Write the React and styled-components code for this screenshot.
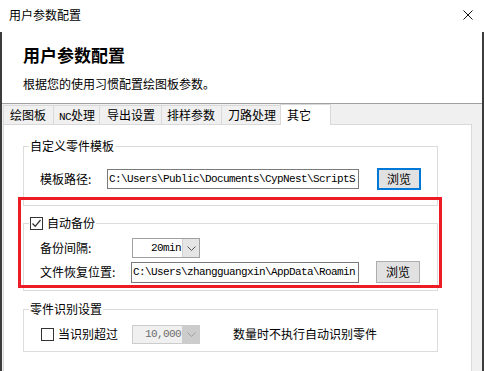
import React from 'react';
import styled, { createGlobalStyle } from 'styled-components';

const CJK = `"Noto Sans CJK SC", "Noto Sans", sans-serif`;
const MONO = `"Liberation Mono", "Noto Sans CJK SC", monospace`;

const GlobalStyle = createGlobalStyle`
  html, body { margin: 0; padding: 0; background: #fff; }
  body { font-family: ${CJK}; font-size: 12px; color: #000; }
  * { box-sizing: border-box; }
`;

const Window = styled.div`
  width: 484px;
  height: 371px;
  overflow: hidden;
  background: #fff;
  display: flex;
  flex-direction: column;
  font-family: ${CJK};
  font-size: 12px;
`;

const TitleBar = styled.div`
  height: 32px;
  flex: none;
  display: flex;
  align-items: center;
  justify-content: space-between;
  padding: 0 11px 2px 9px;
`;

const TitleText = styled.span`
  font-size: 12px;
  line-height: 14px;
`;

const CloseIcon = styled.svg`
  width: 10px;
  height: 10px;
  display: block;
`;

const Frame = styled.div`
  flex: 1;
  min-height: 0;
  display: flex;
  flex-direction: column;
  border-left: 2px solid #3c3c3c;
  border-right: 2px solid #3c3c3c;
`;

const Header = styled.div`
  height: 71px;
  flex: none;
  padding: 13px 0 0 21px;
`;

const Heading = styled.h1`
  margin: 0;
  font-size: 17px;
  font-weight: 700;
  line-height: 20px;
`;

const Subtitle = styled.p`
  margin: 12px 0 0;
  font-size: 12px;
  line-height: 14px;
`;

const TabsArea = styled.div`
  flex: 1;
  min-height: 0;
  display: flex;
  flex-direction: column;
  background: #f0f0f0;
  border-top: 1px solid #a0a0a0;
  padding: 0 10px 0 1px;
`;

const TabStrip = styled.div`
  height: 20px;
  flex: none;
  display: flex;
  align-items: flex-end;
  position: relative;
  z-index: 1;
`;

const Tab = styled.div`
  width: ${p => p.$w}px;
  height: ${p => (p.$active ? 21 : 19)}px;
  margin-bottom: ${p => (p.$active ? -1 : 0)}px;
  margin-left: ${p => (p.$first ? 0 : -1)}px;
  background: ${p => (p.$active ? '#fff' : '#f0f0f0')};
  border: 1px solid #d9d9d9;
  border-bottom: none;
  padding: ${p => (p.$active ? 3 : 2)}px 0 0 ${p => p.$pl}px;
  font-size: 12px;
  line-height: 14px;
  white-space: nowrap;
`;

const Latin = styled.span`
  font-family: ${MONO};
  font-size: 11px;
  letter-spacing: -0.6px;
`;

const Panel = styled.div`
  flex: 1;
  position: relative;
  background: #fff;
  border: 1px solid #d9d9d9;
  border-bottom: none;
  padding: 14px 0 0 19px;
  display: flex;
  flex-direction: column;
`;

const Group = styled.fieldset`
  width: 415px;
  margin: ${p => p.$mt || 0}px 0 0;
  padding: 0;
  border: 1px solid #dcdcdc;
  min-width: 0;
`;

const Legend = styled.legend`
  margin-left: 5px;
  padding: 0 1px;
  height: 14px;
  display: flex;
  align-items: center;
  gap: 4px;
  font-size: 12px;
  line-height: 14px;
`;

const GroupBody = styled.div`
  display: flex;
  flex-direction: column;
  gap: 2px;
  padding: ${p => p.$pt}px 0 ${p => p.$pb}px 16px;
`;

const Row = styled.div`
  height: 22px;
  display: flex;
  align-items: center;
`;

const Label = styled.span`
  width: ${p => p.$w}px;
  flex: none;
  margin-left: ${p => p.$ml || 0}px;
  font-size: 12px;
  line-height: 14px;
  white-space: nowrap;
`;

const TextBox = styled.div`
  width: ${p => p.$w}px;
  height: ${p => p.$h}px;
  flex: none;
  border: 1px solid #7a7a7a;
  background: #fff;
  padding: 0 1px;
  font-family: ${MONO};
  font-size: 11px;
  letter-spacing: -0.6px;
  line-height: ${p => p.$h - 2}px;
  white-space: nowrap;
  overflow: hidden;
`;

const Button = styled.div`
  width: 44px;
  height: 22px;
  flex: none;
  margin-left: ${p => p.$ml}px;
  background: #e1e1e1;
  border: ${p => (p.$focus ? '2px solid #0078d7' : '1px solid #adadad')};
  display: flex;
  align-items: center;
  justify-content: center;
  font-size: 12px;
  line-height: 14px;
`;

const Combo = styled.div`
  width: 68px;
  height: ${p => p.$h}px;
  flex: none;
  display: flex;
  border: 1px solid ${p => (p.$disabled ? '#cccccc' : '#a0a0a0')};
  background: ${p => (p.$disabled ? '#f0f0f0' : '#fff')};
`;

const ComboValue = styled.span`
  flex: 1;
  text-align: right;
  padding-right: 1px;
  font-family: ${MONO};
  font-size: 11px;
  letter-spacing: -0.6px;
  line-height: ${p => p.$h - 2}px;
  color: ${p => (p.$disabled ? '#6d6d6d' : '#000')};
  white-space: nowrap;
`;

const ComboArrow = styled.span`
  width: 17px;
  flex: none;
  display: flex;
  align-items: center;
  justify-content: center;
  background: ${p => (p.$disabled ? '#cccccc' : '#e5e5e5')};
  border-left: 1px solid ${p => (p.$disabled ? '#cccccc' : '#d0d0d0')};
`;

const CheckBox = styled.span`
  width: 13px;
  height: 13px;
  flex: none;
  border: 1px solid #333;
  background: #fff;
  display: flex;
  align-items: center;
  justify-content: center;
  margin-left: ${p => p.$ml || 0}px;
`;

const Note = styled.span`
  margin-left: ${p => p.$ml}px;
  font-size: 12px;
  line-height: 14px;
  white-space: nowrap;
`;

const Highlight = styled.div`
  position: absolute;
  left: 14px;
  top: 72px;
  width: 424px;
  height: 91px;
  border: 3px solid #ed1c24;
  pointer-events: none;
`;

const Chevron = ({ color }) => (
  <svg width="9" height="5" viewBox="0 0 9 5">
    <path d="M0.5 0.5 L4.5 4.5 L8.5 0.5" fill="none" stroke={color} strokeWidth="1" />
  </svg>
);

const Check = () => (
  <svg width="11" height="11" viewBox="0 0 11 11">
    <path d="M1.5 5.5 L4.2 8.3 L9.5 2" fill="none" stroke="#333" strokeWidth="1.3" />
  </svg>
);

const tabs = [
  { key: 'draw', label: '绘图板', w: 51, pl: 6 },
  { key: 'nc', label: <><Latin>NC</Latin>处理</>, w: 47, pl: 5 },
  { key: 'export', label: '导出设置', w: 63, pl: 7 },
  { key: 'nest', label: '排样参数', w: 61, pl: 5 },
  { key: 'path', label: '刀路处理', w: 60, pl: 6 },
  { key: 'other', label: '其它', w: 51, pl: 6, active: true },
];

export default function App() {
  return (
    <Window>
      <GlobalStyle />
      <TitleBar>
        <TitleText>用户参数配置</TitleText>
        <CloseIcon viewBox="0 0 10 10">
          <path d="M0.5 0.5 L9.5 9.5 M9.5 0.5 L0.5 9.5" stroke="#111" strokeWidth="1" />
        </CloseIcon>
      </TitleBar>
      <Frame>
        <Header>
          <Heading>用户参数配置</Heading>
          <Subtitle>根据您的使用习惯配置绘图板参数。</Subtitle>
        </Header>
        <TabsArea>
          <TabStrip>
            {tabs.map((t, i) => (
              <Tab key={t.key} $w={t.w} $pl={t.pl} $active={t.active} $first={i === 0}>
                {t.label}
              </Tab>
            ))}
          </TabStrip>
          <Panel>
            <Group>
              <Legend>自定义零件模板</Legend>
              <GroupBody $pt={15} $pb={15}>
                <Row>
                  <Label $w={67}>模板路径:</Label>
                  <TextBox $w={252} $h={20}>C:\Users\Public\Documents\CypNest\ScriptS</TextBox>
                  <Button $ml={18} $focus>浏览</Button>
                </Row>
              </GroupBody>
            </Group>

            <Group $mt={10}>
              <Legend>
                <CheckBox><Check /></CheckBox>
                <span>自动备份</span>
              </Legend>
              <GroupBody $pt={7} $pb={7}>
                <Row>
                  <Label $w={92}>备份间隔:</Label>
                  <Combo $h={20}>
                    <ComboValue $h={20}>20min</ComboValue>
                    <ComboArrow><Chevron color="#555" /></ComboArrow>
                  </Combo>
                </Row>
                <Row>
                  <Label $w={91}>文件恢复位置:</Label>
                  <TextBox $w={228} $h={21}>C:\Users\zhangguangxin\AppData\Roamin</TextBox>
                  <Button $ml={17}>浏览</Button>
                </Row>
              </GroupBody>
            </Group>

            <Group $mt={11}>
              <Legend>零件识别设置</Legend>
              <GroupBody $pt={7} $pb={6}>
                <Row>
                  <CheckBox $ml={1} />
                  <Label $w={74} $ml={4}>当识别超过</Label>
                  <Combo $h={19} $disabled>
                    <ComboValue $h={19} $disabled>10,000</ComboValue>
                    <ComboArrow $disabled><Chevron color="#a0a0a0" /></ComboArrow>
                  </Combo>
                  <Note $ml={33}>数量时不执行自动识别零件</Note>
                </Row>
              </GroupBody>
            </Group>

            <Highlight />
          </Panel>
        </TabsArea>
      </Frame>
    </Window>
  );
}
